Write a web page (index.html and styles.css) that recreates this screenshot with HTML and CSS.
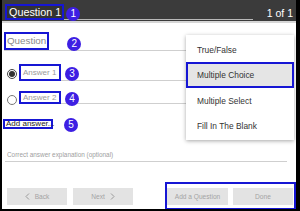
FILE: index.html
```
<!DOCTYPE html>
<html>
<head>
<meta charset="utf-8">
<link rel="stylesheet" href="styles.css">
</head>
<body>
<div class="frame">
  <div class="header">
    <div class="head-field">
      <div class="outline title">Question 1</div>
      <div class="badge b1">1</div>
    </div>
    <div class="count">1 of 1</div>
  </div>

  <div class="q-row">
    <div class="outline q-box">Question</div>
    <div class="badge b2">2</div>
  </div>

  <div class="ans-row r1">
    <div class="radio on"></div>
    <div class="ans-field">
      <div class="outline a-box">Answer 1</div>
      <div class="badge b3">3</div>
    </div>
  </div>

  <div class="ans-row r2">
    <div class="radio"></div>
    <div class="ans-field">
      <div class="outline a-box">Answer 2</div>
      <div class="badge b4">4</div>
    </div>
  </div>

  <div class="add-row">
    <div class="outline add-box">Add answer...</div>
    <div class="badge b5">5</div>
  </div>

  <div class="expl">Correct answer explanation (optional)</div>

  <div class="footer">
    <div class="btn nav"><svg class="chev" width="5" height="7" viewBox="0 0 5 7"><path d="M4 0.5 L1 3.5 L4 6.5" fill="none" stroke="#9a9a9a" stroke-width="1"/></svg><span>Back</span></div>
    <div class="btn nav next"><span>Next</span><svg class="chev" width="5" height="7" viewBox="0 0 5 7"><path d="M1 0.5 L4 3.5 L1 6.5" fill="none" stroke="#9a9a9a" stroke-width="1"/></svg></div>
    <div class="outline actions">
      <div class="btn add">Add a Question</div>
      <div class="btn done">Done</div>
    </div>
  </div>

  <div class="menu">
    <div class="item">True/False</div>
    <div class="item active">Multiple Choice</div>
    <div class="item">Multiple Select</div>
    <div class="item">Fill In The Blank</div>
  </div>
</div>
</body>
</html>
```

FILE: styles.css
```
* { box-sizing: border-box; }
html, body { margin: 0; padding: 0; background: #000; }
body { width: 300px; height: 211px; overflow: hidden; font-family: "Liberation Sans", Arial, sans-serif; }

.frame {
  position: relative;
  margin-left: 2px;
  width: 294px;
  height: 209px;
  background: #fff;
  display: flex;
  flex-direction: column;
  overflow: hidden;
}

.outline { border: 2px solid #1616d4; }

.badge {
  flex: 0 0 auto;
  width: 14px;
  height: 14px;
  border-radius: 50%;
  background: #3d1fe3;
  color: #fff;
  font-size: 10px;
  line-height: 14px;
  text-align: center;
}

.header {
  flex: 0 0 auto;
  height: 23px;
  background: #3b3b3b;
  border-bottom: 2px solid #d6d6d6;
  display: flex;
  align-items: flex-start;
  padding: 0 3px;
}
.head-field {
  width: 248px;
  height: 20px;
  border-bottom: 1px solid #b8b8b8;
  display: flex;
  align-items: flex-start;
}
.title {
  margin-top: 4px;
  height: 16px;
  padding: 0 1px 0 2px;
  background: #333;
  color: #fff;
  font-size: 10.8px;
  line-height: 12px;
  white-space: nowrap;
}
.b1 { margin-top: 7px; margin-left: 2px; }
.count {
  margin-left: auto;
  margin-top: 7px;
  color: #fff;
  font-size: 10.5px;
  line-height: 12px;
}

.q-row {
  flex: 0 0 auto;
  margin: 9px 9px 0 2px;
  height: 19px;
  border-bottom: 1px solid #cfcfcf;
  display: flex;
  align-items: flex-start;
}
.q-box {
  height: 18px;
  padding: 0 1px;
  color: #8a8a8a;
  font-size: 9.8px;
  line-height: 14px;
  white-space: nowrap;
}
.b2 { margin-left: 18px; margin-top: 5px; }

.ans-row {
  flex: 0 0 auto;
  display: flex;
  align-items: flex-start;
  margin-left: 5px;
  margin-right: 9px;
}
.r1 { margin-top: 13px; }
.r2 { margin-top: 10px; }
.radio {
  flex: 0 0 auto;
  width: 10px;
  height: 10px;
  border-radius: 50%;
  border: 1px solid #777;
  display: flex;
  align-items: center;
  justify-content: center;
}
.radio.on { border-color: #444; }
.radio.on::after {
  content: "";
  width: 6px;
  height: 6px;
  border-radius: 50%;
  background: #333;
}
.r1 .radio { margin-top: 5px; }
.r2 .radio { margin-top: 4px; }

.ans-field {
  flex: 1 1 auto;
  margin-left: 2px;
  display: flex;
  align-items: flex-start;
  border-bottom: 1px solid #cfcfcf;
}
.r1 .ans-field { height: 17px; }
.r2 .ans-field { height: 13px; }
.a-box {
  width: 42px;
  padding: 0 2px;
  color: #9a9a9a;
  font-size: 8px;
  white-space: nowrap;
}
.r1 .a-box { height: 17px; line-height: 13px; }
.r2 .a-box { height: 13px; line-height: 9px; }
.b3 { margin-left: 4px; margin-top: 3px; }
.b4 { margin-left: 4px; margin-top: 1px; }

.add-row {
  flex: 0 0 auto;
  height: 10px;
  margin-top: 14px;
  margin-left: 1px;
  display: flex;
  align-items: flex-start;
}
.add-box {
  width: 50px;
  height: 10px;
  padding: 0 1px;
  color: #222;
  font-size: 8px;
  line-height: 6px;
  white-space: nowrap;
  overflow: visible;
}
.b5 { margin-left: 11px; margin-top: -1px; }

.expl {
  flex: 0 0 auto;
  margin: 22px 9px 0 3px;
  height: 11px;
  padding-left: 2px;
  border-bottom: 1px solid #cfcfcf;
  color: #a0a0a0;
  font-size: 6.4px;
  line-height: 8px;
  white-space: nowrap;
}

.footer {
  flex: 0 0 auto;
  margin-top: 20px;
  height: 28px;
  display: flex;
  align-items: flex-start;
  padding-left: 5px;
}
.btn {
  height: 17px;
  background: #e3e3e3;
  color: #a3a3a3;
  font-size: 6.6px;
  display: flex;
  align-items: center;
  justify-content: center;
  white-space: nowrap;
}
.nav { width: 60px; margin-top: 6px; gap: 5px; }
.next { margin-left: 6px; }
.chev { display: block; }
.actions {
  margin-left: auto;
  width: 131px;
  height: 28px;
  display: flex;
  align-items: flex-start;
  padding: 4px 1px 0 0;
  gap: 5px;
}
.add { width: 61px; }
.done { width: 60px; }

.menu {
  position: absolute;
  left: 184px;
  top: 35px;
  width: 108px;
  padding: 2px 0;
  background: #fff;
  box-shadow: 0 1px 4px rgba(0, 0, 0, 0.35);
}
.item {
  height: 25px;
  padding-left: 11px;
  display: flex;
  align-items: center;
  color: #333;
  font-size: 8.4px;
  white-space: nowrap;
}
.item.active {
  height: 26px;
  background: #e5e5e5;
  border: 2px solid #1616d4;
  padding-left: 9px;
}
```
